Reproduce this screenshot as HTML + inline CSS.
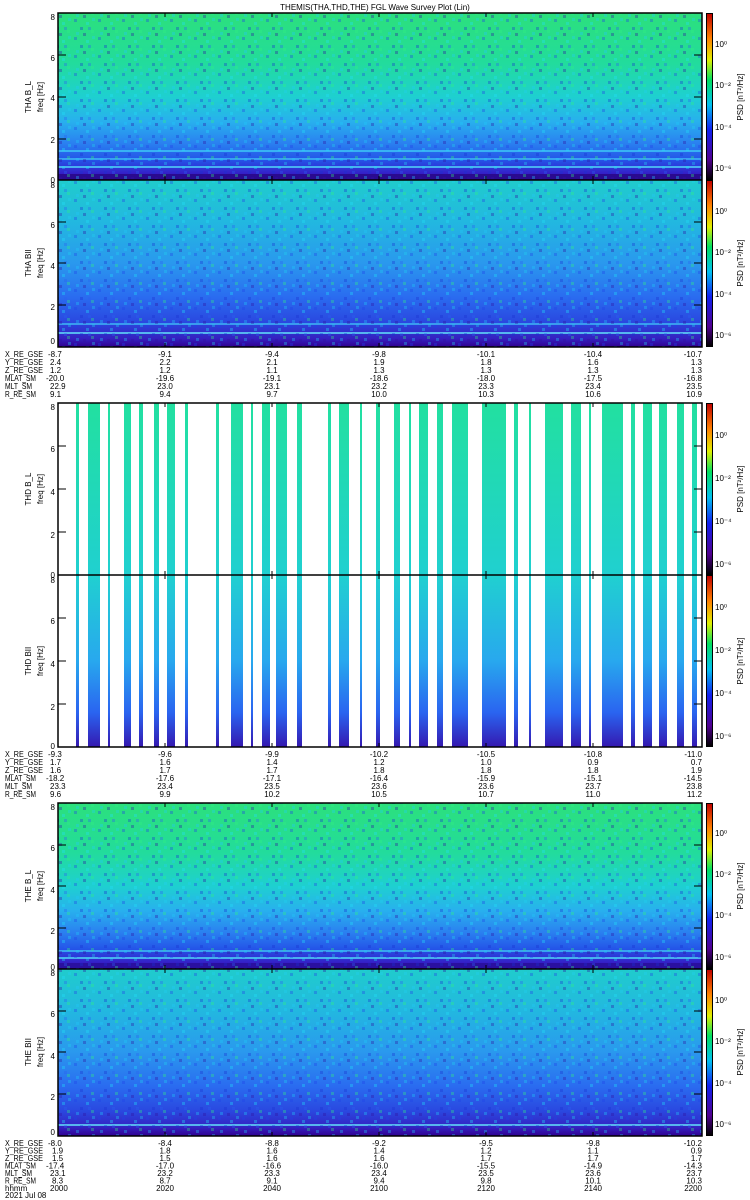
<!DOCTYPE html>
<html><head><meta charset="utf-8"><style>
html,body{margin:0;padding:0;background:#fff;width:750px;height:1200px;overflow:hidden}
svg{display:block}
text{font-family:"Liberation Sans",sans-serif;font-size:8px;fill:#000}
</style></head><body>
<svg width="750" height="1200" viewBox="0 0 750 1200" xmlns="http://www.w3.org/2000/svg">
<defs>
<linearGradient id="gL" x1="0" y1="0" x2="0" y2="1">
<stop offset="0" stop-color="#2ce07c"/><stop offset="0.3" stop-color="#22dc9c"/>
<stop offset="0.5" stop-color="#1ed0d0"/><stop offset="0.65" stop-color="#28b0ee"/>
<stop offset="0.78" stop-color="#2a80f0"/><stop offset="0.88" stop-color="#2454e8"/>
<stop offset="0.96" stop-color="#3420c8"/><stop offset="1" stop-color="#300090"/>
</linearGradient>
<linearGradient id="gB" x1="0" y1="0" x2="0" y2="1">
<stop offset="0" stop-color="#20cccc"/><stop offset="0.25" stop-color="#22b8e0"/>
<stop offset="0.5" stop-color="#2a98ee"/><stop offset="0.7" stop-color="#2a6cf0"/>
<stop offset="0.85" stop-color="#2a48e0"/><stop offset="0.95" stop-color="#3420c0"/>
<stop offset="1" stop-color="#300090"/>
</linearGradient>
<linearGradient id="gD" x1="0" y1="0" x2="0" y2="1">
<stop offset="0" stop-color="#22e0a0"/><stop offset="0.5" stop-color="#20d0d0"/>
<stop offset="0.75" stop-color="#28a8ee"/><stop offset="0.9" stop-color="#2a64f0"/>
<stop offset="1" stop-color="#3418b0"/>
</linearGradient>
<linearGradient id="gC" x1="0" y1="1" x2="0" y2="0">
<stop offset="0" stop-color="#000"/><stop offset="0.12" stop-color="#500090"/>
<stop offset="0.3" stop-color="#1020f0"/><stop offset="0.45" stop-color="#00c0f0"/>
<stop offset="0.6" stop-color="#00e060"/><stop offset="0.72" stop-color="#e0f000"/>
<stop offset="0.85" stop-color="#ff8000"/><stop offset="1" stop-color="#c00000"/>
</linearGradient>
<pattern id="nz" width="24" height="18" patternUnits="userSpaceOnUse">
<rect x="2" y="1" width="3" height="3" fill="#2040e8"/><rect x="14" y="4" width="3" height="3" fill="#20e0f8"/>
<rect x="8" y="9" width="3" height="3" fill="#1830d0"/><rect x="19" y="12" width="3" height="3" fill="#30f080"/>
<rect x="4" y="14" width="3" height="3" fill="#20c8f8"/><rect x="11" y="15" width="3" height="3" fill="#3010a0"/>
<rect x="20" y="0" width="3" height="3" fill="#20d0f0"/><rect x="16" y="9" width="3" height="3" fill="#2a60f0"/>
</pattern>
</defs>

<text x="375" y="10" text-anchor="middle">THEMIS(THA,THD,THE) FGL Wave Survey Plot (Lin)</text>

<!-- THA -->
<rect x="58" y="13" width="644" height="167" fill="url(#gL)"/>
<rect x="58" y="150" width="644" height="2" fill="#40d0f8" opacity=".7"/>
<rect x="58" y="158" width="644" height="2" fill="#40c0f8" opacity=".7"/>
<rect x="58" y="166" width="644" height="2" fill="#50d0f8" opacity=".8"/>
<rect x="58" y="174" width="644" height="5" fill="#2a0a90"/>
<rect x="58" y="180" width="644" height="167" fill="url(#gB)"/>
<rect x="58" y="323" width="644" height="2" fill="#40c0f8" opacity=".7"/>
<rect x="58" y="332" width="644" height="2" fill="#60d8f8" opacity=".8"/>
<rect x="58" y="13" width="644" height="334" fill="url(#nz)" opacity=".35"/>
<rect x="58" y="13" width="644" height="334" fill="none" stroke="#000" stroke-width="1.5"/>
<line x1="58" y1="180" x2="702" y2="180" stroke="#000" stroke-width="1.5"/>

<!-- THD -->
<g id="thd" fill="url(#gD)">
<rect x="76" y="403" width="3" height="344"/><rect x="88" y="403" width="12" height="344"/>
<rect x="108" y="403" width="2" height="344"/><rect x="124" y="403" width="7" height="344"/>
<rect x="139" y="403" width="4" height="344"/><rect x="154" y="403" width="5" height="344"/>
<rect x="167" y="403" width="8" height="344"/><rect x="185" y="403" width="3" height="344"/>
<rect x="216" y="403" width="3" height="344"/><rect x="231" y="403" width="12" height="344"/>
<rect x="251" y="403" width="2" height="344"/><rect x="262" y="403" width="8" height="344"/>
<rect x="276" y="403" width="11" height="344"/><rect x="297" y="403" width="5" height="344"/>
<rect x="328" y="403" width="3" height="344"/><rect x="339" y="403" width="10" height="344"/>
<rect x="360" y="403" width="2" height="344"/><rect x="376" y="403" width="4" height="344"/>
<rect x="394" y="403" width="6" height="344"/><rect x="409" y="403" width="2" height="344"/>
<rect x="419" y="403" width="9" height="344"/><rect x="437" y="403" width="6" height="344"/>
<rect x="452" y="403" width="16" height="344"/><rect x="482" y="403" width="24" height="344"/>
<rect x="514" y="403" width="4" height="344"/><rect x="529" y="403" width="2" height="344"/>
<rect x="545" y="403" width="18" height="344"/><rect x="571" y="403" width="10" height="344"/>
<rect x="589" y="403" width="2" height="344"/><rect x="602" y="403" width="21" height="344"/>
<rect x="631" y="403" width="4" height="344"/><rect x="643" y="403" width="9" height="344"/>
<rect x="659" y="403" width="8" height="344"/><rect x="677" y="403" width="7" height="344"/>
<rect x="692" y="403" width="5" height="344"/>
</g>
<use href="#thd" fill="url(#nz)" opacity=".35"/>
<rect x="58" y="403" width="644" height="344" fill="none" stroke="#000" stroke-width="1.5"/>
<line x1="58" y1="575" x2="702" y2="575" stroke="#000" stroke-width="1.5"/>

<!-- THE -->
<rect x="58" y="803" width="644" height="166" fill="url(#gL)"/>
<rect x="58" y="950" width="644" height="2" fill="#40c8f8" opacity=".7"/>
<rect x="58" y="957" width="644" height="2" fill="#50d0f8" opacity=".8"/>
<rect x="58" y="963" width="644" height="5" fill="#2a10a0"/>
<rect x="58" y="969" width="644" height="167" fill="url(#gB)"/>
<rect x="58" y="1124" width="644" height="2" fill="#60d8f8" opacity=".8"/>
<rect x="58" y="803" width="644" height="333" fill="url(#nz)" opacity=".35"/>
<rect x="58" y="803" width="644" height="333" fill="none" stroke="#000" stroke-width="1.5"/>
<line x1="58" y1="969" x2="702" y2="969" stroke="#000" stroke-width="1.5"/>

<!-- colorbars -->
<g stroke="#000" stroke-width="1">
<rect x="706.5" y="13.5" width="6" height="166" fill="url(#gC)"/>
<rect x="706.5" y="180.5" width="6" height="166" fill="url(#gC)"/>
<rect x="706.5" y="403.5" width="6" height="171" fill="url(#gC)"/>
<rect x="706.5" y="575.5" width="6" height="171" fill="url(#gC)"/>
<rect x="706.5" y="803.5" width="6" height="165" fill="url(#gC)"/>
<rect x="706.5" y="969.5" width="6" height="166" fill="url(#gC)"/>
</g>
<g font-size="7">
<text x="715" y="47">10⁰</text><text x="715" y="88">10⁻²</text><text x="715" y="130">10⁻⁴</text><text x="715" y="171">10⁻⁶</text>
<text x="715" y="214">10⁰</text><text x="715" y="255">10⁻²</text><text x="715" y="297">10⁻⁴</text><text x="715" y="338">10⁻⁶</text>
<text x="715" y="438">10⁰</text><text x="715" y="481">10⁻²</text><text x="715" y="524">10⁻⁴</text><text x="715" y="567">10⁻⁶</text>
<text x="715" y="610">10⁰</text><text x="715" y="653">10⁻²</text><text x="715" y="696">10⁻⁴</text><text x="715" y="739">10⁻⁶</text>
<text x="715" y="836">10⁰</text><text x="715" y="877">10⁻²</text><text x="715" y="918">10⁻⁴</text><text x="715" y="960">10⁻⁶</text>
<text x="715" y="1003">10⁰</text><text x="715" y="1044">10⁻²</text><text x="715" y="1086">10⁻⁴</text><text x="715" y="1127">10⁻⁶</text>
</g>
<g font-size="7.5" text-anchor="middle">
<text transform="translate(743,97) rotate(-90)">PSD [nT²/Hz]</text>
<text transform="translate(743,263) rotate(-90)">PSD [nT²/Hz]</text>
<text transform="translate(743,489) rotate(-90)">PSD [nT²/Hz]</text>
<text transform="translate(743,661) rotate(-90)">PSD [nT²/Hz]</text>
<text transform="translate(743,886) rotate(-90)">PSD [nT²/Hz]</text>
<text transform="translate(743,1052) rotate(-90)">PSD [nT²/Hz]</text>
</g>
<g font-size="8.5" text-anchor="middle">
<text transform="translate(31,97) rotate(-90)">THA B_L</text><text transform="translate(43,97) rotate(-90)">freq [Hz]</text>
<text transform="translate(31,263) rotate(-90)">THA BII</text><text transform="translate(43,263) rotate(-90)">freq [Hz]</text>
<text transform="translate(31,489) rotate(-90)">THD B_L</text><text transform="translate(43,489) rotate(-90)">freq [Hz]</text>
<text transform="translate(31,661) rotate(-90)">THD BII</text><text transform="translate(43,661) rotate(-90)">freq [Hz]</text>
<text transform="translate(31,886) rotate(-90)">THE B_L</text><text transform="translate(43,886) rotate(-90)">freq [Hz]</text>
<text transform="translate(31,1052) rotate(-90)">THE BII</text><text transform="translate(43,1052) rotate(-90)">freq [Hz]</text>
</g>
<!-- y labels -->
<g font-size="9" text-anchor="end">
<text x="55" y="20">8</text><text x="55" y="61">6</text><text x="55" y="101">4</text><text x="55" y="143">2</text><text x="55" y="183">0</text>
<text x="55" y="188">8</text><text x="55" y="228">6</text><text x="55" y="269">4</text><text x="55" y="310">2</text><text x="55" y="344">0</text>
<text x="55" y="410">8</text><text x="55" y="452">6</text><text x="55" y="495">4</text><text x="55" y="538">2</text><text x="55" y="578">0</text>
<text x="55" y="583">8</text><text x="55" y="624">6</text><text x="55" y="667">4</text><text x="55" y="710">2</text><text x="55" y="749">0</text>
<text x="55" y="810">8</text><text x="55" y="851">6</text><text x="55" y="893">4</text><text x="55" y="934">2</text><text x="55" y="970">0</text>
<text x="55" y="976">8</text><text x="55" y="1017">6</text><text x="55" y="1059">4</text><text x="55" y="1100">2</text><text x="55" y="1135">0</text>
</g>
<!-- ticks -->
<g stroke="#000" stroke-width="1">
<path d="M165 13v4M272 13v4M379 13v4M486 13v4M593 13v4M165 347v-4M272 347v-4M379 347v-4M486 347v-4M593 347v-4M165 176v8M272 176v8M379 176v8M486 176v8M593 176v8"/>
<path d="M165 403v4M272 403v4M379 403v4M486 403v4M593 403v4M165 747v-4M272 747v-4M379 747v-4M486 747v-4M593 747v-4M165 571v8M272 571v8M379 571v8M486 571v8M593 571v8"/>
<path d="M165 803v4M272 803v4M379 803v4M486 803v4M593 803v4M165 1136v-4M272 1136v-4M379 1136v-4M486 1136v-4M593 1136v-4M165 965v8M272 965v8M379 965v8M486 965v8M593 965v8"/>
<path d="M58 55h8M58 97h8M58 139h8M58 222h8M58 263h8M58 305h8M58 446h8M58 489h8M58 532h8M58 618h8M58 661h8M58 704h8M58 845h8M58 886h8M58 928h8M58 1011h8M58 1052h8M58 1094h8"/>
<path d="M702 55h-8M702 97h-8M702 139h-8M702 222h-8M702 263h-8M702 305h-8M702 446h-8M702 489h-8M702 532h-8M702 618h-8M702 661h-8M702 704h-8M702 845h-8M702 886h-8M702 928h-8M702 1011h-8M702 1052h-8M702 1094h-8"/>
</g>

<!-- text blocks -->
<g font-size="8">
<g transform="translate(0,357)">
<text x="5" y="0" textLength="38" lengthAdjust="spacingAndGlyphs">X_RE_GSE</text><text x="5" y="8" textLength="38" lengthAdjust="spacingAndGlyphs">Y_RE_GSE</text><text x="5" y="16" textLength="38" lengthAdjust="spacingAndGlyphs">Z_RE_GSE</text><text x="5" y="24" textLength="31" lengthAdjust="spacingAndGlyphs">MLAT_SM</text><text x="5" y="32" textLength="27" lengthAdjust="spacingAndGlyphs">MLT_SM</text><text x="5" y="40" textLength="31" lengthAdjust="spacingAndGlyphs">R_RE_SM</text>
<text x="48" y="0">-8.7</text><text x="50" y="8">2.4</text><text x="50" y="16">1.2</text><text x="46" y="24">-20.0</text><text x="50" y="32">22.9</text><text x="50" y="40">9.1</text>
<g text-anchor="middle">
<text x="165" y="0">-9.1</text><text x="165" y="8">2.2</text><text x="165" y="16">1.2</text><text x="165" y="24">-19.6</text><text x="165" y="32">23.0</text><text x="165" y="40">9.4</text>
<text x="272" y="0">-9.4</text><text x="272" y="8">2.1</text><text x="272" y="16">1.1</text><text x="272" y="24">-19.1</text><text x="272" y="32">23.1</text><text x="272" y="40">9.7</text>
<text x="379" y="0">-9.8</text><text x="379" y="8">1.9</text><text x="379" y="16">1.3</text><text x="379" y="24">-18.6</text><text x="379" y="32">23.2</text><text x="379" y="40">10.0</text>
<text x="486" y="0">-10.1</text><text x="486" y="8">1.8</text><text x="486" y="16">1.3</text><text x="486" y="24">-18.0</text><text x="486" y="32">23.3</text><text x="486" y="40">10.3</text>
<text x="593" y="0">-10.4</text><text x="593" y="8">1.6</text><text x="593" y="16">1.3</text><text x="593" y="24">-17.5</text><text x="593" y="32">23.4</text><text x="593" y="40">10.6</text>
</g>
<g text-anchor="end">
<text x="702" y="0">-10.7</text><text x="702" y="8">1.3</text><text x="702" y="16">1.3</text><text x="702" y="24">-16.8</text><text x="702" y="32">23.5</text><text x="702" y="40">10.9</text>
</g>
</g>
<g transform="translate(0,757)">
<text x="5" y="0" textLength="38" lengthAdjust="spacingAndGlyphs">X_RE_GSE</text><text x="5" y="8" textLength="38" lengthAdjust="spacingAndGlyphs">Y_RE_GSE</text><text x="5" y="16" textLength="38" lengthAdjust="spacingAndGlyphs">Z_RE_GSE</text><text x="5" y="24" textLength="31" lengthAdjust="spacingAndGlyphs">MLAT_SM</text><text x="5" y="32" textLength="27" lengthAdjust="spacingAndGlyphs">MLT_SM</text><text x="5" y="40" textLength="31" lengthAdjust="spacingAndGlyphs">R_RE_SM</text>
<text x="48" y="0">-9.3</text><text x="50" y="8">1.7</text><text x="50" y="16">1.6</text><text x="46" y="24">-18.2</text><text x="50" y="32">23.3</text><text x="50" y="40">9.6</text>
<g text-anchor="middle">
<text x="165" y="0">-9.6</text><text x="165" y="8">1.6</text><text x="165" y="16">1.7</text><text x="165" y="24">-17.6</text><text x="165" y="32">23.4</text><text x="165" y="40">9.9</text>
<text x="272" y="0">-9.9</text><text x="272" y="8">1.4</text><text x="272" y="16">1.7</text><text x="272" y="24">-17.1</text><text x="272" y="32">23.5</text><text x="272" y="40">10.2</text>
<text x="379" y="0">-10.2</text><text x="379" y="8">1.2</text><text x="379" y="16">1.8</text><text x="379" y="24">-16.4</text><text x="379" y="32">23.6</text><text x="379" y="40">10.5</text>
<text x="486" y="0">-10.5</text><text x="486" y="8">1.0</text><text x="486" y="16">1.8</text><text x="486" y="24">-15.9</text><text x="486" y="32">23.6</text><text x="486" y="40">10.7</text>
<text x="593" y="0">-10.8</text><text x="593" y="8">0.9</text><text x="593" y="16">1.8</text><text x="593" y="24">-15.1</text><text x="593" y="32">23.7</text><text x="593" y="40">11.0</text>
</g>
<g text-anchor="end">
<text x="702" y="0">-11.0</text><text x="702" y="8">0.7</text><text x="702" y="16">1.9</text><text x="702" y="24">-14.5</text><text x="702" y="32">23.8</text><text x="702" y="40">11.2</text>
</g>
</g>
<g transform="translate(0,1146)">
<text x="5" y="0" textLength="38" lengthAdjust="spacingAndGlyphs">X_RE_GSE</text><text x="5" y="7.5" textLength="38" lengthAdjust="spacingAndGlyphs">Y_RE_GSE</text><text x="5" y="15" textLength="38" lengthAdjust="spacingAndGlyphs">Z_RE_GSE</text><text x="5" y="22.5" textLength="31" lengthAdjust="spacingAndGlyphs">MLAT_SM</text><text x="5" y="30" textLength="27" lengthAdjust="spacingAndGlyphs">MLT_SM</text><text x="5" y="37.5" textLength="31" lengthAdjust="spacingAndGlyphs">R_RE_SM</text><text x="5" y="45">hhmm</text><text x="5" y="52">2021 Jul 08</text>
<text x="48" y="0">-8.0</text><text x="52" y="7.5">1.9</text><text x="52" y="15">1.5</text><text x="46" y="22.5">-17.4</text><text x="50" y="30">23.1</text><text x="52" y="37.5">8.3</text><text x="50" y="45">2000</text>
<g text-anchor="middle">
<text x="165" y="0">-8.4</text><text x="165" y="7.5">1.8</text><text x="165" y="15">1.5</text><text x="165" y="22.5">-17.0</text><text x="165" y="30">23.2</text><text x="165" y="37.5">8.7</text><text x="165" y="45">2020</text>
<text x="272" y="0">-8.8</text><text x="272" y="7.5">1.6</text><text x="272" y="15">1.6</text><text x="272" y="22.5">-16.6</text><text x="272" y="30">23.3</text><text x="272" y="37.5">9.1</text><text x="272" y="45">2040</text>
<text x="379" y="0">-9.2</text><text x="379" y="7.5">1.4</text><text x="379" y="15">1.6</text><text x="379" y="22.5">-16.0</text><text x="379" y="30">23.4</text><text x="379" y="37.5">9.4</text><text x="379" y="45">2100</text>
<text x="486" y="0">-9.5</text><text x="486" y="7.5">1.2</text><text x="486" y="15">1.7</text><text x="486" y="22.5">-15.5</text><text x="486" y="30">23.5</text><text x="486" y="37.5">9.8</text><text x="486" y="45">2120</text>
<text x="593" y="0">-9.8</text><text x="593" y="7.5">1.1</text><text x="593" y="15">1.7</text><text x="593" y="22.5">-14.9</text><text x="593" y="30">23.6</text><text x="593" y="37.5">10.1</text><text x="593" y="45">2140</text>
</g>
<g text-anchor="end">
<text x="702" y="0">-10.2</text><text x="702" y="7.5">0.9</text><text x="702" y="15">1.7</text><text x="702" y="22.5">-14.3</text><text x="702" y="30">23.7</text><text x="702" y="37.5">10.3</text><text x="702" y="45">2200</text>
</g>
</g>
</g>
</svg>
</body></html>
